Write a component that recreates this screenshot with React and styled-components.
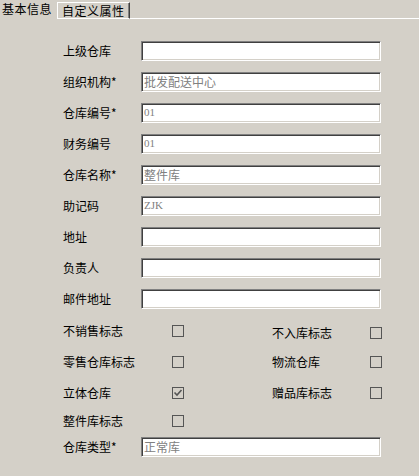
import React from 'react';
import styled, { createGlobalStyle } from 'styled-components';

const GlobalStyle = createGlobalStyle`
  html, body {
    margin: 0;
    padding: 0;
    background: #d4d0c8;
  }
  body {
    width: 419px;
    height: 476px;
    overflow: hidden;
    font-family: "Noto Sans CJK SC", "Liberation Sans", sans-serif;
    font-size: 12px;
    color: #000;
  }
`;

const fields = [
  { label: '上级仓库', value: '' },
  { label: '组织机构*', value: '批发配送中心' },
  { label: '仓库编号*', value: '01', latin: true },
  { label: '财务编号', value: '01', latin: true },
  { label: '仓库名称*', value: '整件库' },
  { label: '助记码', value: 'ZJK', latin: true },
  { label: '地址', value: '' },
  { label: '负责人', value: '' },
  { label: '邮件地址', value: '' }
];

const flags = [
  [{ label: '不销售标志' }, { label: '不入库标志', drop: 2 }],
  [{ label: '零售仓库标志' }, { label: '物流仓库' }],
  [{ label: '立体仓库', checked: true }, { label: '赠品库标志' }],
  [{ label: '整件库标志' }]
];

/**
 * Check()
 * Small flat checkbox, with a gray tick when checked.
 */
const Check = ({ checked }) => (
  <CheckBox>
    {checked && (
      <svg width="10" height="10" viewBox="0 0 10 10">
        <path d="M1.5 4.5 L4 7 L8.5 2" fill="none" stroke="#555" strokeWidth="1.6" />
      </svg>
    )}
  </CheckBox>
);

const App = () => (
  <Page>
    <GlobalStyle />
    <TabBar>
      <Tab active>基本信息</Tab>
      <Tab>自定义属性</Tab>
      <TabLine />
    </TabBar>

    <Form>
      <Fields>
        {fields.map(f => (
          <FieldRow key={f.label}>
            <Label>{f.label}</Label>
            <Input latin={f.latin}>{f.value}</Input>
          </FieldRow>
        ))}
      </Fields>

      <Flags>
        {flags.map((row, i) => (
          <FlagRow key={i} last={i === flags.length - 1}>
            {row.map((flag, j) => (
              <Flag key={flag.label} drop={flag.drop} right={j === 1}>
                <FlagLabel right={j === 1}>{flag.label}</FlagLabel>
                <Check checked={flag.checked} />
              </Flag>
            ))}
          </FlagRow>
        ))}
      </Flags>

      <FieldRow>
        <Label>仓库类型*</Label>
        <Input>正常库</Input>
      </FieldRow>
    </Form>
  </Page>
);

export default App;

const Page = styled.div`
  width: 419px;
  height: 476px;
  background: #d4d0c8;
`;

const TabBar = styled.div`
  display: flex;
  align-items: flex-end;
  height: 19px;
`;

const Tab = styled.div`
  box-sizing: border-box;
  height: ${p => (p.active ? 19 : 17)}px;
  padding: ${p => (p.active ? '1px 5px 0 2px' : '0 4px 0 4px')};
  line-height: 16px;
  letter-spacing: 0.5px;
  white-space: nowrap;
  border-left: ${p => (p.active ? 'none' : '1px solid #fff')};
  border-top: ${p => (p.active ? 'none' : '1px solid #fff')};
  border-right: ${p => (p.active ? 'none' : '1px solid #404040')};
  border-bottom: ${p => (p.active ? 'none' : '1px solid #fff')};
  box-shadow: ${p => (p.active ? 'none' : 'inset -1px 0 0 #808080')};
`;

const TabLine = styled.div`
  flex: 1;
  height: 1px;
  background: #fff;
`;

const Form = styled.div`
  padding: 22px 0 0 63px;
`;

const Fields = styled.div`
  display: flex;
  flex-direction: column;
  gap: 11px;
`;

const FieldRow = styled.div`
  display: flex;
  align-items: center;
  height: 20px;
`;

const Label = styled.div`
  flex-shrink: 0;
  width: 78px;
  line-height: 20px;
  white-space: nowrap;
`;

const Input = styled.div`
  box-sizing: border-box;
  flex-shrink: 0;
  width: 240px;
  height: 20px;
  padding: 0 2px;
  background: #fff;
  border-top: 1px solid #808080;
  border-left: 1px solid #808080;
  border-right: 1px solid #fff;
  border-bottom: 1px solid #fff;
  box-shadow: inset 1px 1px 0 #404040, inset -1px -1px 0 #d4d0c8;
  color: #808080;
  font-family: ${p => (p.latin ? '"Liberation Serif", serif' : '"Noto Sans CJK SC", sans-serif')};
  font-size: ${p => (p.latin ? 11 : 12)}px;
  line-height: 17px;
  white-space: nowrap;
  overflow: hidden;
`;

const Flags = styled.div`
  display: flex;
  flex-direction: column;
  gap: 19px;
  margin-top: 16px;
  margin-bottom: 10px;
`;

const FlagRow = styled.div`
  display: flex;
  height: 12px;
  margin-top: ${p => (p.last ? '-3px' : '0')};
`;

const Flag = styled.div`
  display: flex;
  flex-shrink: 0;
  align-items: center;
  width: ${p => (p.right ? 110 : 209)}px;
  height: 12px;
  position: relative;
  top: ${p => p.drop || 0}px;
`;

const FlagLabel = styled.div`
  width: ${p => (p.right ? 98 : 109)}px;
  line-height: 12px;
  white-space: nowrap;
`;

const CheckBox = styled.div`
  box-sizing: border-box;
  flex-shrink: 0;
  width: 12px;
  height: 12px;
  border: 1px solid #555;
  display: flex;
  align-items: center;
  justify-content: center;
`;
